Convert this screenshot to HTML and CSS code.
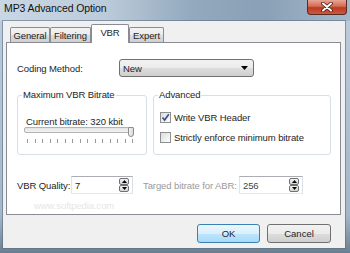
FILE: index.html
```html
<!DOCTYPE html>
<html lang="en">
<head>
    <meta charset="UTF-8">
    <title>MP3 Advanced Option</title>
    <link rel="stylesheet" href="styles.css">
</head>
<body>
    <div class="window">
        <!-- Aero title bar -->
        <div class="titlebar">
            <span class="title">MP3 Advanced Option</span>
            <button class="close" aria-label="Close">
                <svg width="14" height="10" viewBox="0 0 14 10">
                    <path d="M3 1.5L11 8.5M11 1.5L3 8.5" stroke="#4a1a12" stroke-width="3.6" stroke-linecap="round"/>
                    <path d="M3 1.5L11 8.5M11 1.5L3 8.5" stroke="#ffffff" stroke-width="2" stroke-linecap="round"/>
                </svg>
            </button>
        </div>

        <div class="client">
            <div class="tabs">
                <div class="tab tab-general">General</div>
                <div class="tab tab-filtering">Filtering</div>
                <div class="tab tab-vbr active">VBR</div>
                <div class="tab tab-expert">Expert</div>
            </div>

            <div class="panel">
                <div class="row row-coding">
                    <span class="label-coding">Coding Method:</span>
                    <div class="select">
                        <span>New</span>
                        <svg width="7" height="4" viewBox="0 0 7 4"><path d="M0 0H7L3.5 4Z" fill="#000"/></svg>
                    </div>
                </div>

                <div class="groups">
                    <fieldset class="group group-bitrate">
                        <legend>Maximum VBR Bitrate</legend>
                        <div class="current">Current bitrate: 320 kbit</div>
                        <div class="slider">
                            <div class="track"></div>
                            <div class="thumb"></div>
                        </div>
                        <div class="ticks">
                            <span></span><span></span><span></span><span></span><span></span>
                            <span></span><span></span><span></span><span></span><span></span>
                            <span></span><span></span><span></span><span></span><span></span>
                        </div>
                    </fieldset>

                    <fieldset class="group group-advanced">
                        <legend>Advanced</legend>
                        <label class="check">
                            <span class="box">
                                <svg width="9" height="9" viewBox="0 0 9 9"><path d="M1.5 4.5L3.6 7L7.8 1.2" stroke="#3d518f" stroke-width="1.7" fill="none"/></svg>
                            </span>
                            Write VBR Header
                        </label>
                        <label class="check">
                            <span class="box"></span>
                            Strictly enforce minimum bitrate
                        </label>
                    </fieldset>
                </div>

                <div class="row row-quality">
                    <span class="label-quality">VBR Quality:</span>
                    <div class="spin spin-quality">
                        <span>7</span>
                        <div class="spin-btns">
                            <span class="spin-btn"><svg width="5" height="3" viewBox="0 0 5 3"><path d="M0 3H5L2.5 0Z" fill="#000"/></svg></span>
                            <span class="spin-btn"><svg width="5" height="3" viewBox="0 0 5 3"><path d="M0 0H5L2.5 3Z" fill="#000"/></svg></span>
                        </div>
                    </div>
                    <span class="label-abr">Targed bitrate for ABR:</span>
                    <div class="spin spin-abr">
                        <span>256</span>
                        <div class="spin-btns">
                            <span class="spin-btn"><svg width="5" height="3" viewBox="0 0 5 3"><path d="M0 3H5L2.5 0Z" fill="#000"/></svg></span>
                            <span class="spin-btn"><svg width="5" height="3" viewBox="0 0 5 3"><path d="M0 0H5L2.5 3Z" fill="#000"/></svg></span>
                        </div>
                    </div>
                </div>

                <div class="watermark">www.softpedia.com</div>
            </div>

            <div class="footer">
                <button class="btn btn-default">OK</button>
                <button class="btn">Cancel</button>
            </div>
        </div>
    </div>
</body>
</html>
```

FILE: styles.css
```css
/* Windows 7 style dialog */
:root {
    --color-frame-top: #bccddd;
    --color-frame-bottom: #6c7f91;
    --color-client: #f0f0f0;
    --color-tab-border: #898c95;
    --color-group-border: #d5dfe5;
    --color-text: #1e1e1e;
    --color-disabled: #9a9a9a;
    --font-ui: "Liberation Sans", Arial, sans-serif;
}

* {
    margin: 0;
    padding: 0;
    box-sizing: border-box;
}

body {
    width: 350px;
    height: 253px;
    overflow: hidden;
    font-family: var(--font-ui);
    font-size: 9.5px;
    letter-spacing: -0.1px;
    color: var(--color-text);
    background: linear-gradient(to bottom, var(--color-frame-top), #a3b7ca 85%, var(--color-frame-bottom));
}

.window {
    height: 253px;
    display: flex;
    flex-direction: column;
}

/* Title bar */
.titlebar {
    height: 21px;
    display: flex;
    justify-content: space-between;
    align-items: flex-start;
    background: linear-gradient(to right, #c9d7e4 0%, #bccbda 30%, #93a9be 55%, #8aa0b6 75%, #a4b8cb 100%);
}

.title {
    padding-left: 4px;
    line-height: 17px;
    font-size: 10.5px;
    color: #111;
}

.close {
    width: 40px;
    height: 15px;
    margin-right: 3px;
    border: 1px solid #5a2b24;
    border-top: none;
    border-radius: 0 0 4px 4px;
    background: linear-gradient(to bottom, #e7a594, #d46a52 45%, #bb3a22 55%, #cc5a3f);
    display: flex;
    align-items: center;
    justify-content: center;
}

/* Client area */
.client {
    flex: 1;
    margin: 0 5px 5px 3px;
    padding: 3px 4px 0 3px;
    background-color: var(--color-client);
    box-shadow: 0 0 0 1px rgba(90, 110, 130, 0.6);
}

.tabs {
    height: 18px;
    padding-left: 4px;
    display: flex;
    align-items: flex-end;
}

.tab {
    height: 15px;
    border: 1px solid var(--color-tab-border);
    border-bottom: none;
    border-radius: 2px 2px 0 0;
    background: linear-gradient(to bottom, #f3f3f3, #ebebeb 50%, #dddddd 51%, #cfcfcf);
    display: flex;
    align-items: center;
    justify-content: center;
}

.tab-general { width: 40px; }
.tab-filtering { width: 41px; }
.tab-vbr { width: 38px; }
.tab-expert { width: 35px; }

.tab.active {
    position: relative;
    height: 19px;
    margin-bottom: -1px;
    padding-bottom: 3px;
    background: #ffffff;
}

.panel {
    height: 173px;
    border: 1px solid var(--color-tab-border);
    background-color: #ffffff;
    padding: 16px 0 0 10px;
}

.row {
    display: flex;
    align-items: center;
    height: 18px;
}

.label-coding {
    width: 102px;
}

.select {
    width: 135px;
    height: 18px;
    border: 1px solid #707070;
    border-radius: 3px;
    background: linear-gradient(to bottom, #f2f2f2, #ebebeb 50%, #dddddd 51%, #cfcfcf);
    display: flex;
    align-items: center;
    justify-content: space-between;
    padding: 0 5px 0 3px;
}

/* Group boxes */
.groups {
    margin-top: 12px;
    display: flex;
    gap: 6px;
}

.group {
    border: 1px solid var(--color-group-border);
    border-radius: 3px;
    padding: 0 0 11px 4px;
}

.group legend {
    padding: 0 1px;
    line-height: 12px;
}

.group-bitrate { width: 130px; }
.group-advanced { width: 178px; }

.current {
    margin: 15px 0 0 4px;
    line-height: 12px;
}

.slider {
    position: relative;
    width: 108px;
    height: 10px;
    margin: -3px 0 0 2px;
}

.track {
    margin-top: 2px;
    height: 6px;
    border: 1px solid #b4b4b4;
    border-radius: 2px;
    background: linear-gradient(to bottom, #e2e5e6, #f1f2f2);
}

.thumb {
    position: absolute;
    right: -2px;
    top: 0;
    width: 6px;
    height: 10px;
    border: 1px solid #8c8c8c;
    border-radius: 1px 1px 3px 3px;
    background: linear-gradient(to right, #f4f4f4, #d8d8d8);
}

.ticks {
    width: 106px;
    margin: 2px 0 0 5px;
    height: 4px;
    display: flex;
    justify-content: space-between;
}

.ticks span {
    width: 1px;
    height: 4px;
    background-color: #9a9a9a;
}

.check {
    display: flex;
    align-items: center;
    gap: 3px;
    height: 11px;
    margin: 11px 0 0 2px;
}

.check + .check {
    margin-top: 9px;
}

.box {
    width: 11px;
    height: 11px;
    border: 1px solid #8e8f8f;
    background: linear-gradient(135deg, #dcdcdc, #ffffff);
    display: flex;
    align-items: center;
    justify-content: center;
}

/* Quality row */
.row-quality {
    margin-top: 21px;
}

.label-quality {
    width: 54px;
}

.spin {
    height: 18px;
    border: 1px solid #abadb3;
    border-color: #abadb3 #dbdfe6 #e3e9ef #e2e3ea;
    background: #ffffff;
    display: flex;
    align-items: center;
    justify-content: space-between;
    padding: 0 3px 0 3px;
}

.spin-quality { width: 62px; }
.spin-abr { width: 64px; color: #444; }

.label-abr {
    width: 96px;
    margin-left: 10px;
    color: var(--color-disabled);
}

.spin-btns {
    display: flex;
    flex-direction: column;
}

.spin-btn {
    width: 10px;
    height: 7px;
    border: 1px solid #707070;
    border-radius: 2px;
    background: linear-gradient(to bottom, #f4f4f4, #d4d4d4);
    display: flex;
    align-items: center;
    justify-content: center;
}

.watermark {
    margin: 6px 0 0 17px;
    line-height: 12px;
    color: #e6e6e6;
}

/* Dialog buttons */
.footer {
    display: flex;
    justify-content: flex-end;
    gap: 7px;
    padding: 9px 10px 0 0;
}

.btn {
    width: 63px;
    height: 19px;
    font-family: var(--font-ui);
    font-size: 9.5px;
    color: var(--color-text);
    border: 1px solid #707070;
    border-radius: 3px;
    background: linear-gradient(to bottom, #f2f2f2, #ebebeb 50%, #dddddd 51%, #cfcfcf);
}

.btn + .btn {
    width: 64px;
}

.btn-default {
    border-color: #3c7fb1;
    background: linear-gradient(to bottom, #eaf6fd, #d9f0fc 50%, #bee6fd 51%, #a7d9f5);
}
```
